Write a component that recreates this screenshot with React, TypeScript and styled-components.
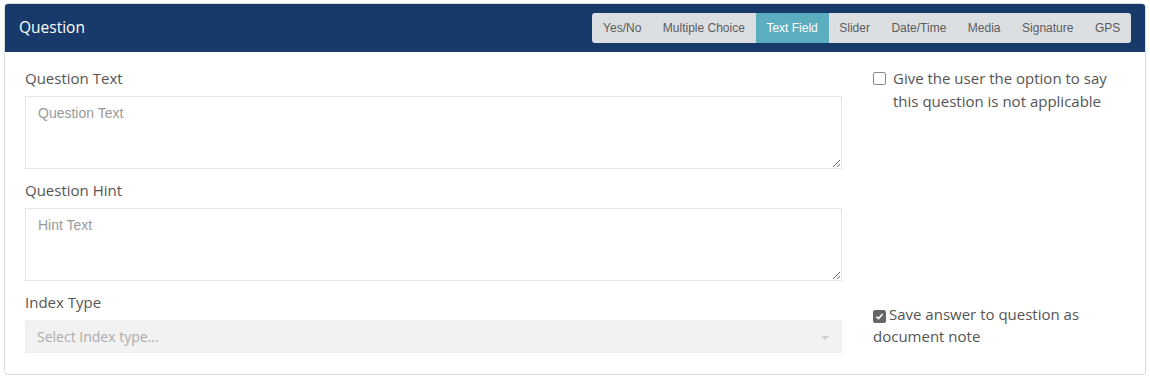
import React from "react";
import styled, { createGlobalStyle } from "styled-components";

const Global = createGlobalStyle`
  html, body { margin: 0; padding: 0; background: #fff; }
  body { font-family: "Open Sans", "Noto Sans", sans-serif; }
  * { box-sizing: border-box; }
`;

const Panel = styled.section`
  margin: 3px 4px 0 4px;
  width: 1142px;
  height: 372px;
  border: 1px solid #d9d9d9;
  border-radius: 4px;
  overflow: hidden;
  display: flex;
  flex-direction: column;
`;

const Header = styled.header`
  background: #173a6b;
  height: 49px;
  flex-shrink: 0;
  display: flex;
  align-items: center;
  justify-content: space-between;
  padding: 0 15px 0 15px;
  margin: -1px -1px 0 -1px;
`;

const Title = styled.h2`
  margin: 0 0 2px 0;
  color: #fff;
  font-family: "Open Sans", sans-serif;
  font-size: 15.5px;
  font-weight: 400;
`;

const TabGroup = styled.div`
  display: flex;
  background: #dcdfe2;
  border-radius: 3px;
  height: 30px;
  overflow: hidden;
  margin-top: 1px;
`;

const Tab = styled.button<{ $active?: boolean }>`
  border: none;
  margin: 0;
  padding: 0 10.75px;
  height: 30px;
  font-family: "Liberation Sans", Arial, sans-serif;
  font-size: 12px;
  color: ${(p) => (p.$active ? "#fff" : "#5c5c5c")};
  background: ${(p) => (p.$active ? "#5badbf" : "transparent")};
  cursor: pointer;
`;

const Body = styled.div`
  flex: 1;
  display: flex;
  gap: 31px;
  padding: 15px 15px 20px 20px;
`;

const Left = styled.div`
  width: 817px;
  display: flex;
  flex-direction: column;
`;

const Field = styled.div`
  display: flex;
  flex-direction: column;
  margin-bottom: 10px;
  &:last-child { margin-bottom: 0; }
`;

const Label = styled.label`
  font-family: "Open Sans", sans-serif;
  font-size: 15px;
  line-height: 22px;
  color: #555;
  margin-bottom: 7px;
`;

const TextArea = styled.textarea`
  width: 817px;
  height: 73px;
  border: 1px solid #e6e6e6;
  border-radius: 0;
  padding: 7px 12px;
  font-family: "Liberation Sans", Arial, sans-serif;
  font-size: 14px;
  line-height: 18px;
  color: #555;
  resize: vertical;
  outline: none;
  &::placeholder { color: #9a9a9a; }
`;

const Select = styled.div`
  height: 33px;
  background: #f2f2f2;
  border: 1px solid #efefef;
  display: flex;
  align-items: center;
  justify-content: space-between;
  padding: 0 12px 0 11px;
  font-family: "Open Sans", sans-serif;
  font-size: 14px;
  color: #ababab;
`;

const Caret = styled.span`
  width: 0;
  height: 0;
  border-left: 4px solid transparent;
  border-right: 4px solid transparent;
  border-top: 4px solid #cfcfcf;
  margin-top: 2px;
`;

const Right = styled.div`
  width: 258px;
  display: flex;
  flex-direction: column;
  justify-content: space-between;
  padding: 0 0 7px 0;
`;

const CheckRow = styled.div`
  font-family: "Open Sans", sans-serif;
  font-size: 15px;
  line-height: 22px;
  color: #555;
`;

const HangingRow = styled(CheckRow)`
  display: flex;
  align-items: flex-start;
  gap: 7px;
  line-height: 23px;
`;

const Box = styled.span<{ $checked?: boolean }>`
  display: inline-flex;
  align-items: center;
  justify-content: center;
  width: 13px;
  height: 13px;
  border-radius: 2px;
  border: 1px solid ${(p) => (p.$checked ? "#666" : "#8a8a8a")};
  background: ${(p) => (p.$checked ? "#666" : "#fff")};
  vertical-align: -1px;
  margin-right: 3px;
  flex-shrink: 0;
`;

const HangBox = styled(Box)`
  margin-top: 5px;
  margin-right: 0;
`;

const Check = () => (
  <svg width="9" height="9" viewBox="0 0 9 9">
    <path d="M1.5 4.6 L3.6 6.6 L7.6 2" fill="none" stroke="#fff" strokeWidth="1.6" />
  </svg>
);

const tabs = ["Yes/No", "Multiple Choice", "Text Field", "Slider", "Date/Time", "Media", "Signature", "GPS"];

export default function App() {
  return (
    <>
      <Global />
      <Panel>
        <Header>
          <Title>Question</Title>
          <TabGroup>
            {tabs.map((t) => (
              <Tab key={t} $active={t === "Text Field"}>{t}</Tab>
            ))}
          </TabGroup>
        </Header>
        <Body>
          <Left>
            <Field>
              <Label>Question Text</Label>
              <TextArea placeholder="Question Text" />
            </Field>
            <Field>
              <Label>Question Hint</Label>
              <TextArea placeholder="Hint Text" />
            </Field>
            <Field>
              <Label>Index Type</Label>
              <Select>
                <span>Select Index type...</span>
                <Caret />
              </Select>
            </Field>
          </Left>
          <Right>
            <HangingRow>
              <HangBox />
              <span>Give the user the option to say this question is not applicable</span>
            </HangingRow>
            <CheckRow>
              <Box $checked><Check /></Box>Save answer to question as document note
            </CheckRow>
          </Right>
        </Body>
      </Panel>
    </>
  );
}
